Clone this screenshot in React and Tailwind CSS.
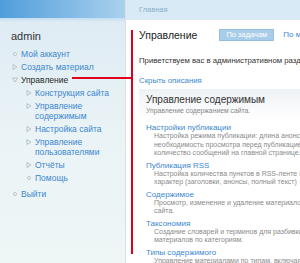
import React from 'react';

const sans = { fontFamily: '"Liberation Sans", Arial, sans-serif' };

function Bullet({ type }) {
  if (type === 'open') {
    return (
      <svg width="6" height="6" viewBox="0 0 6 6" className="shrink-0 mt-[2px]">
        <path d="M0.5 1 L5.5 1 L3 5 Z" fill="none" stroke="#b7c3c9" strokeWidth="1" />
      </svg>
    );
  }
  if (type === 'closed') {
    return (
      <svg width="6" height="6" viewBox="0 0 6 6" className="shrink-0 mt-[2px]">
        <path d="M1 0.5 L5 3 L1 5.5 Z" fill="none" stroke="#b7c3c9" strokeWidth="1" />
      </svg>
    );
  }
  return <span className="shrink-0 mt-[3px] w-[4px] h-[4px] rounded-full border border-[#bcc6cb] bg-[#f4f8f9]" />;
}

function NavItem({ bullet, children, active, sub }) {
  return (
    <li className={`flex items-start gap-[3px] mb-[3px] ${sub ? 'pl-[26px]' : 'pl-[12px]'}`}>
      <span className="w-[6px] flex justify-center">
        <Bullet type={bullet} />
      </span>
      <span className={`text-[8.5px] leading-[10px] ${active ? 'text-[#1f1f1f]' : 'text-[#3b87cf]'}`}>{children}</span>
    </li>
  );
}

const items = [
  {
    title: 'Настройки публикации',
    desc: [
      'Настройка режима публикации: длина анонса,',
      'необходимость просмотра перед публикацией,',
      'количество сообщений на главной странице.',
    ],
  },
  {
    title: 'Публикация RSS',
    desc: ['Настройка количества пунктов в RSS-ленте и', 'характер (заголовки, анонсы, полный текст)'],
  },
  { title: 'Содержимое', desc: ['Просмотр, изменение и удаление материалов', 'сайта.'] },
  { title: 'Таксономия', desc: ['Создание словарей и терминов для разбивки', 'материалов по категориям.'] },
  { title: 'Типы содержимого', desc: ['Управление материалами по типам, включая'] },
];

export default function App() {
  return (
    <div className="relative w-[300px] h-[263px] overflow-hidden flex bg-white" style={sans}>
      {/* sidebar */}
      <div className="w-[125px] shrink-0 flex flex-col bg-gradient-to-b from-[#dceaf3] via-[#eaf3f6] to-[#eef6f6]">
        <div className="h-[18px] shrink-0 bg-gradient-to-r from-[#4f9edb] via-[#7db7e4] to-[#a9d1ee]" />
        <div className="h-[4px] bg-gradient-to-b from-[#c4def0] to-transparent" />
        <div className="pl-[11px] pt-[7px] text-[11px] leading-[14px] text-[#333]">admin</div>
        <ul className="mt-[6px]">
          <NavItem bullet="leaf">Мой аккаунт</NavItem>
          <NavItem bullet="closed">Создать материал</NavItem>
          <NavItem bullet="open" active>Управление</NavItem>
          <NavItem bullet="closed" sub>Конструкция сайта</NavItem>
          <NavItem bullet="closed" sub>Управление<br />содержимым</NavItem>
          <NavItem bullet="closed" sub>Настройка сайта</NavItem>
          <NavItem bullet="closed" sub>Управление<br />пользователями</NavItem>
          <NavItem bullet="closed" sub>Отчёты</NavItem>
          <NavItem bullet="leaf" sub>Помощь</NavItem>
          <li className="h-[3px]" />
          <NavItem bullet="leaf">Выйти</NavItem>
        </ul>
      </div>

      {/* content */}
      <div className="w-[320px] shrink-0 flex flex-col border-l border-[#d7e3ea]">
        <div className="h-[20px] shrink-0 bg-[#d8eaf6] pl-[13px] flex items-center text-[7.5px] text-[#86aecb]">Главная</div>
        <div className="pl-[13px] pt-[8px] flex items-center">
          <h1 className="text-[10.5px] leading-[14px] text-[#222]">Управление</h1>
          <span className="ml-[22px] h-[12px] px-[6px] flex items-center bg-[#a8cde8] border border-[#95bfdf] text-white text-[7.5px]">По задачам</span>
          <span className="ml-[9px] text-[8px] text-[#3b87cf]">По модулям</span>
        </div>
        <p className="pl-[13px] mt-[14px] text-[7.8px] leading-[10px] text-[#333] whitespace-nowrap">Приветствуем вас в административном разделе сайта.</p>
        <p className="pl-[13px] mt-[10px] text-[7.8px] leading-[10px] text-[#3b87cf]">Скрыть описания</p>
        <div className="ml-[13px] mt-[3px] pl-[7px] pt-[5px] pb-[5px] bg-gradient-to-b from-[#eef2f5] to-white">
          <div className="text-[10px] leading-[12px] text-[#333]">Управление содержимым</div>
          <div className="text-[6.8px] leading-[9px] text-[#888]">Управление содержанием сайта.</div>
        </div>
        <div className="ml-[20px] mt-[3px]">
          {items.map((it) => (
            <div key={it.title} className="mb-[3px]">
              <div className="text-[8px] leading-[9px] text-[#3b87cf]">{it.title}</div>
              <div className="pl-[8px]">
                {it.desc.map((d) => (
                  <div key={d} className="text-[7px] leading-[8.5px] text-[#8a8a8a] whitespace-nowrap">{d}</div>
                ))}
              </div>
            </div>
          ))}
        </div>
      </div>

      {/* red annotation */}
      <div className="absolute left-[72px] top-[77px] w-[60px] h-[1.5px] bg-[#e0001b]" />
      <div className="absolute left-[131px] top-[30px] w-[1.5px] h-[224px] bg-[#e0001b]" />
    </div>
  );
}
